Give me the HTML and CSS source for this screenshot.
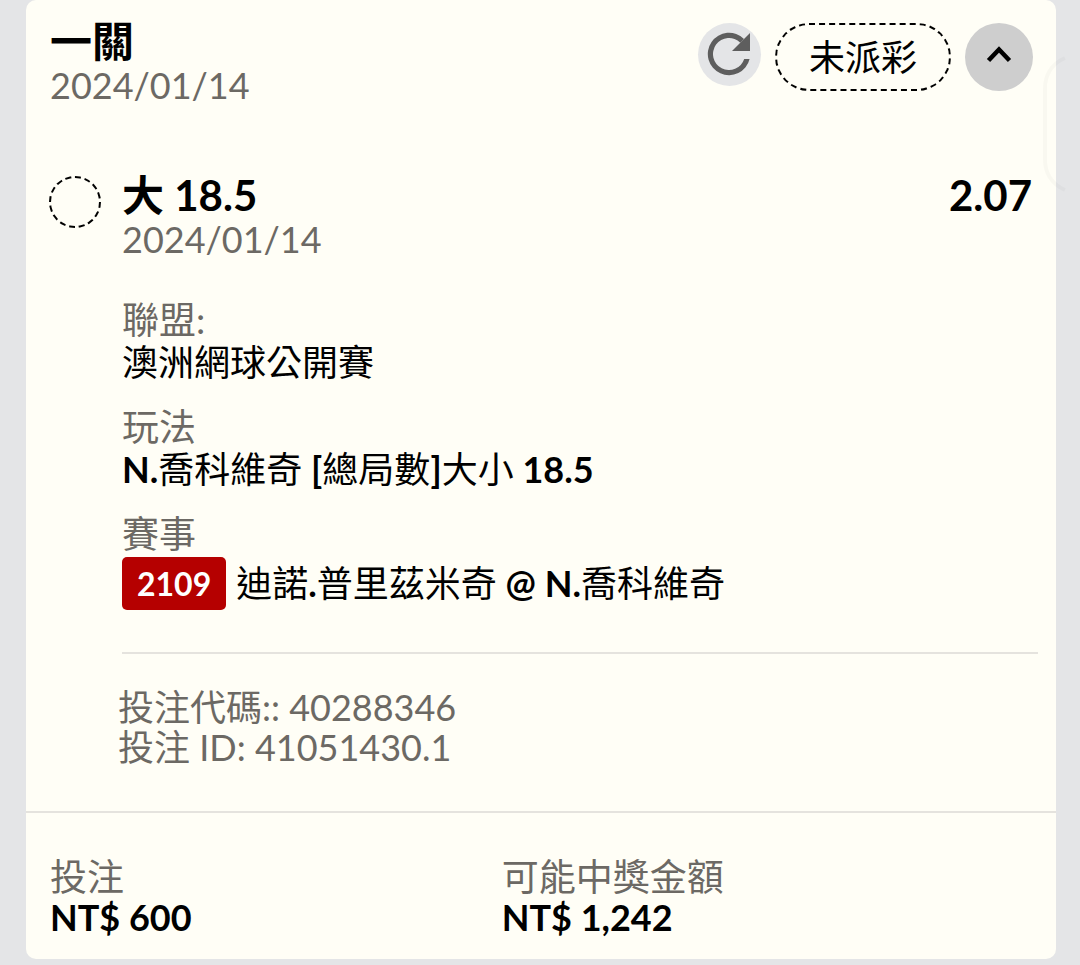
FILE: index.html
```html
<!DOCTYPE html>
<html lang="zh-Hant">
<head>
  <meta charset="UTF-8" />
  <meta name="viewport" content="width=device-width, initial-scale=1.0"/>
  <title>一關</title>
  <link rel="stylesheet" href="styles.css">
</head>
<body>

  <main class="bet-card">
    <header class="bet-header">
      <div class="bet-heading">
        <h1 class="title">一關</h1>
        <p class="date">2024/01/14</p>
      </div>
      <div class="actions">
        <button class="refresh-btn" type="button" aria-label="重新整理">
          <svg viewBox="0 0 63 63" width="63" height="63" fill="#5e5e5e">
            <path d="M51.6 36A21.2 21.2 0 1 1 46 16L42.3 19.7A16 16 0 1 0 46.2 36Z"/>
            <path d="M52 10V28H34Z"/>
          </svg>
        </button>
        <span class="status">未派彩</span>
        <button class="toggle-btn" type="button" aria-label="收合">
          <svg viewBox="0 0 68 68" width="68" height="68">
            <path d="M23.5 37.5L34 26.5L44.5 37.5" fill="none" stroke="#000" stroke-width="4.5"/>
          </svg>
        </button>
      </div>
    </header>

    <section class="leg">
      <span class="leg-state"></span>
      <div class="leg-body">
        <div class="pick">
          <h2 class="title">大 18.5</h2>
          <span class="title">2.07</span>
        </div>
        <p class="date">2024/01/14</p>

        <dl class="details">
          <div class="detail">
            <dt>聯盟:</dt>
            <dd>澳洲網球公開賽</dd>
          </div>
          <div class="detail">
            <dt>玩法</dt>
            <dd><b>N.</b>喬科維奇<b> [</b>總局數<b>]</b>大小<b> 18.5</b></dd>
          </div>
          <div class="detail">
            <dt>賽事</dt>
            <dd class="match">
              <span class="match-no">2109</span>
              <span>迪諾<b>.</b>普里茲米奇<b> @ N.</b>喬科維奇</span>
            </dd>
          </div>
        </dl>

        <div class="codes">
          <p>投注代碼:: 40288346</p>
          <p>投注 ID: 41051430.1</p>
        </div>
      </div>
    </section>

    <dl class="totals">
      <div>
        <dt>投注</dt>
        <dd><b>NT$ 600</b></dd>
      </div>
      <div>
        <dt>可能中獎金額</dt>
        <dd><b>NT$ 1,242</b></dd>
      </div>
    </dl>
  </main>

  <svg class="edge-handle" viewBox="0 0 24 140" width="24" height="140" aria-hidden="true">
    <path d="M22 4C8 10 2 22 2 34V106C2 118 8 130 22 136" fill="none" stroke="#000" stroke-opacity="0.025" stroke-width="4"/>
  </svg>

</body>
</html>
```
FILE: styles.css
```css
* {
  box-sizing: border-box;
}

body {
  margin: 0;
  padding: 0 24px 6px 26px;
  background: #e4e5e7;
  color: #000;
  font-family: Lato, "Noto Sans CJK TC", sans-serif;
  font-size: 36px;
  line-height: 40px;
}

h1, h2, p, dl, dd {
  margin: 0;
}

button {
  padding: 0;
  border: none;
  border-radius: 50%;
  cursor: pointer;
}

button svg {
  display: block;
}

.bet-card {
  background: #fffef6;
  border-radius: 10px;
}

.bet-header {
  display: flex;
  justify-content: space-between;
  padding: 20px 23px 0 24px;
}

.title {
  font-size: 42px;
  font-weight: 700;
  line-height: 42px;
}

.date {
  line-height: 46px;
}

.date, dt, .codes {
  color: #6c6964;
}

dt {
  font-size: 37px;
}

.actions {
  display: flex;
  align-items: flex-start;
  gap: 14px;
  padding-top: 3px;
}

.refresh-btn {
  background: #e4e5e7;
}

.status {
  padding: 12px 32px;
  border: 2px dashed #000;
  border-radius: 34px;
}

.toggle-btn {
  background: #cecece;
}

.leg {
  display: flex;
  gap: 21px;
  padding: 66px 18px 0 23px;
}

.leg-state {
  flex: none;
  width: 52px;
  height: 52px;
  margin-top: 2px;
  border: 2px dashed #000;
  border-radius: 50%;
}

.leg-body {
  flex: 1;
}

.pick {
  display: flex;
  justify-content: space-between;
  padding-right: 6px;
}

.details {
  display: grid;
  gap: 21px;
  padding: 36px 0 42px;
  border-bottom: 2px solid #e5e3de;
  line-height: 43px;
}

b {
  font-weight: 700;
}

.match {
  display: flex;
  align-items: center;
  gap: 10px;
  padding-top: 2px;
}

.match-no {
  padding: 5px 15px;
  border-radius: 5px;
  background: #b50000;
  color: #fff;
  font-size: 32px;
  font-weight: 700;
}

.codes {
  margin-left: -4px;
  padding: 33px 0 44px;
}

.totals {
  display: grid;
  grid-template-columns: 46% 1fr;
  padding: 44px 24px 22px;
  border-top: 2px solid #e5e3de;
}

/* faint pull tab of the side panel */
.edge-handle {
  position: absolute;
  top: 54px;
  right: 13px;
}
```
